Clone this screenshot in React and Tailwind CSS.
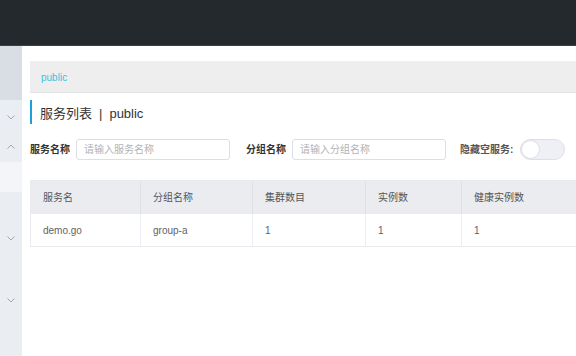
import React from "react";

const Chev = ({ up }) => (
  <svg width="8" height="5" viewBox="0 0 8 5" className="block">
    <path d={up ? "M0.5 4.5 L4 1 L7.5 4.5" : "M0.5 0.5 L4 4 L7.5 0.5"} fill="none" stroke="#9aa0a8" strokeWidth="0.9" />
  </svg>
);

export default function App() {
  const font = { fontFamily: '"Liberation Sans","Noto Sans CJK SC",sans-serif' };
  const cols = [
    ["服务名", "demo.go", "w-[110px]"],
    ["分组名称", "group-a", "w-[112px]"],
    ["集群数目", "1", "w-[113px]"],
    ["实例数", "1", "w-[96px]"],
    ["健康实例数", "1", "w-[140px]"],
  ];
  return (
    <div className="w-[576px] h-[356px] overflow-hidden bg-white flex flex-col" style={font}>
      <div className="h-[46px] shrink-0 bg-[#24292e] border-b border-[#3a3f44]" />
      <div className="flex flex-1 min-h-0">
        <div className="w-[22px] shrink-0 flex flex-col">
          <div className="h-[54px] bg-[#d9dde4]" />
          <div className="h-[32px] bg-[#eaedf1] flex items-center justify-center pt-[2px]"><Chev /></div>
          <div className="h-[30px] bg-[#eaedf1] flex items-center justify-center pb-[2px]"><Chev up /></div>
          <div className="h-[30px] bg-[#f4f5f8]" />
          <div className="flex-1 bg-[#eaedf1] flex flex-col items-center">
            <div className="mt-[44px]"><Chev /></div>
            <div className="mt-[57px]"><Chev /></div>
          </div>
        </div>
        <div className="flex-1 min-w-0 pl-[8px] pt-[14px] overflow-hidden">
          <div className="h-[32px] mt-[1px] bg-[#eeeeee] border-b border-[#e2e2e2] flex items-center pl-[11px] pt-[2px] text-[10px] text-[#3bc3df]">
            public
          </div>
          <div className="mt-[7px] h-[24px] border-l-2 border-[#1ba1d8] pl-[8px] pt-[4px] flex items-center text-[13px] text-[#333]">
            服务列表<span className="mx-[7px]">|</span>public
          </div>
          <div className="mt-[15px] flex items-center h-[21px]">
            <span className="text-[10px] font-bold text-[#333] w-[46px]">服务名称</span>
            <div className="w-[154px] h-[21px] border border-[#dcdfe6] rounded-[3px] flex items-center pl-[7px] text-[10px] text-[#b0b3b8]">请输入服务名称</div>
            <span className="ml-[16px] text-[10px] font-bold text-[#333] w-[46px]">分组名称</span>
            <div className="w-[154px] h-[21px] border border-[#dcdfe6] rounded-[3px] flex items-center pl-[7px] text-[10px] text-[#b0b3b8]">请输入分组名称</div>
            <span className="ml-[14px] text-[10px] font-bold text-[#555] w-[60px]">隐藏空服务:</span>
            <div className="w-[45px] h-[21px] rounded-full bg-[#eef0f5] border border-[#dcdfe6] relative">
              <div className="absolute left-0 top-0 w-[19px] h-[19px] rounded-full bg-white border border-[#dcdfe6]" />
            </div>
          </div>
          <div className="mt-[20px] w-[700px] border border-[#e8eaee]">
            <div className="flex h-[33px] bg-[#ebecf0]">
              {cols.map(([h, , w], i) => (
                <div key={i} className={`${w} shrink-0 flex items-center pl-[12px] text-[10px] text-[#555] ${i < 4 ? "border-r border-[#dfe1e6]" : ""}`}>{h}</div>
              ))}
            </div>
            <div className="flex h-[32px] bg-white">
              {cols.map(([, v, w], i) => (
                <div key={i} className={`${w} shrink-0 flex items-center pl-[12px] text-[10px] text-[#606266] ${i < 4 ? "border-r border-[#ebeef5]" : ""}`}>{v}</div>
              ))}
            </div>
          </div>
        </div>
      </div>
    </div>
  );
}
